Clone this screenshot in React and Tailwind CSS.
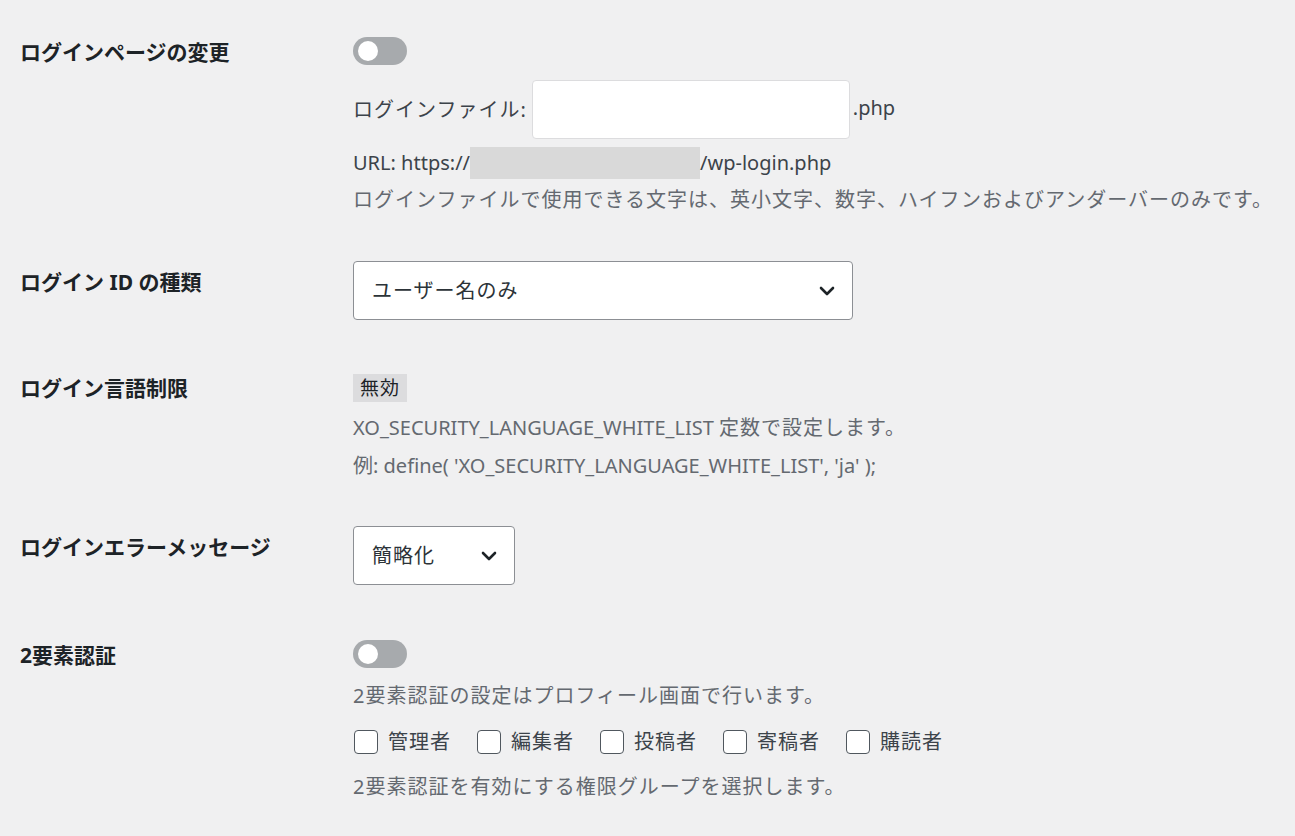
import React from 'react';

/**
 * Security settings screen (login section)
 */

const Toggle = () => (
  <div className="relative w-[54px] h-[28px] rounded-full bg-[#a7aaad]">
    <span className="absolute left-[5px] top-[4px] w-[20px] h-[20px] rounded-full bg-white" />
  </div>
);

const Chevron = () => (
  <svg width="16" height="10" viewBox="0 0 16 10" fill="none">
    <path d="M2 2 L8 8 L14 2" stroke="#1d2327" strokeWidth="2.6" strokeLinecap="round" strokeLinejoin="round" />
  </svg>
);

const Select = ({ value, className = '' }) => (
  <div className={`flex items-center justify-between h-[59px] pl-[18px] pr-[17px] bg-white border border-[#8c8f94] rounded-[4px] text-[20px] text-[#2c3338] ${className}`}>
    <span className="tracking-[1px]">{value}</span>
    <Chevron />
  </div>
);

const Row = ({ label, labelClass = '', className = '', children }) => (
  <div className={`flex items-start ${className}`}>
    <div className={`w-[333px] shrink-0 text-[21px] leading-[30px] font-bold text-[#1d2327] ${labelClass}`}>
      {label}
    </div>
    <div className="flex-1 min-w-0">{children}</div>
  </div>
);

const roles = ['管理者', '編集者', '投稿者', '寄稿者', '購読者'];

export default function App() {
  return (
    <div
      className="min-h-screen bg-[#f0f0f1] pl-[20px] pt-[37px] text-[20px] text-[#3c434a]"
      style={{ fontFamily: '"Noto Sans", "Noto Sans CJK JP", sans-serif' }}
    >
      {/* ログインページの変更 */}
      <Row label="ログインページの変更">
        <Toggle />
        <div className="flex items-center mt-[15px]">
          <span className="tracking-[1px]">ログインファイル:</span>
          <div className="ml-[5px] w-[318px] h-[59px] bg-white border border-[#dcdcde] rounded-[4px]" />
          <span className="ml-[3px] -mt-[4px]">.php</span>
        </div>
        <div className="flex items-center mt-[8px] leading-[30px]">
          <span>URL: https://</span>
          <span className="inline-block w-[230px] h-[32px] bg-[#d9d9d9]" />
          <span>/wp-login.php</span>
        </div>
        <p className="mt-[6px] leading-[30px] text-[#646970] whitespace-nowrap tracking-[1px]">
          ログインファイルで使用できる文字は、英小文字、数字、ハイフンおよびアンダーバーのみです。
        </p>
      </Row>

      {/* ログイン ID の種類 */}
      <Row label="ログイン ID の種類" labelClass="mt-[6px]" className="mt-[46px]">
        <Select value="ユーザー名のみ" className="w-[500px]" />
      </Row>

      {/* ログイン言語制限 */}
      <Row label="ログイン言語制限" className="mt-[53px]">
        <span className="inline-block h-[28px] px-[7px] leading-[28px] bg-[#dcdcde] text-[#1d2327] text-[19px] tracking-[1px]">
          無効
        </span>
        <p className="mt-[10px] leading-[30px] text-[#646970]">
          XO_SECURITY_LANGUAGE_WHITE_LIST <span className="tracking-[1px]">定数で設定します。</span>
        </p>
        <p className="mt-[8px] leading-[30px] text-[#646970]">
          例: define( 'XO_SECURITY_LANGUAGE_WHITE_LIST', 'ja' );
        </p>
      </Row>

      {/* ログインエラーメッセージ */}
      <Row label="ログインエラーメッセージ" labelClass="mt-[6px]" className="mt-[45px]">
        <Select value="簡略化" className="w-[162px]" />
      </Row>

      {/* 2要素認証 */}
      <Row label="2要素認証" className="mt-[55px]">
        <Toggle />
        <p className="mt-[13px] leading-[30px] text-[#646970] tracking-[1px]">
          2要素認証の設定はプロフィール画面で行います。
        </p>
        <div className="flex items-center gap-[25px] mt-[16px] leading-[30px]">
          {roles.map((role) => (
            <label key={role} className="flex items-center">
              <span className="w-[24px] h-[24px] ml-[1px] mr-[10px] bg-white border border-[#50575e] rounded-[4px]" />
              <span className="tracking-[1px]">{role}</span>
            </label>
          ))}
        </div>
        <p className="mt-[15px] leading-[30px] text-[#646970] tracking-[1px]">
          2要素認証を有効にする権限グループを選択します。
        </p>
      </Row>
    </div>
  );
}
